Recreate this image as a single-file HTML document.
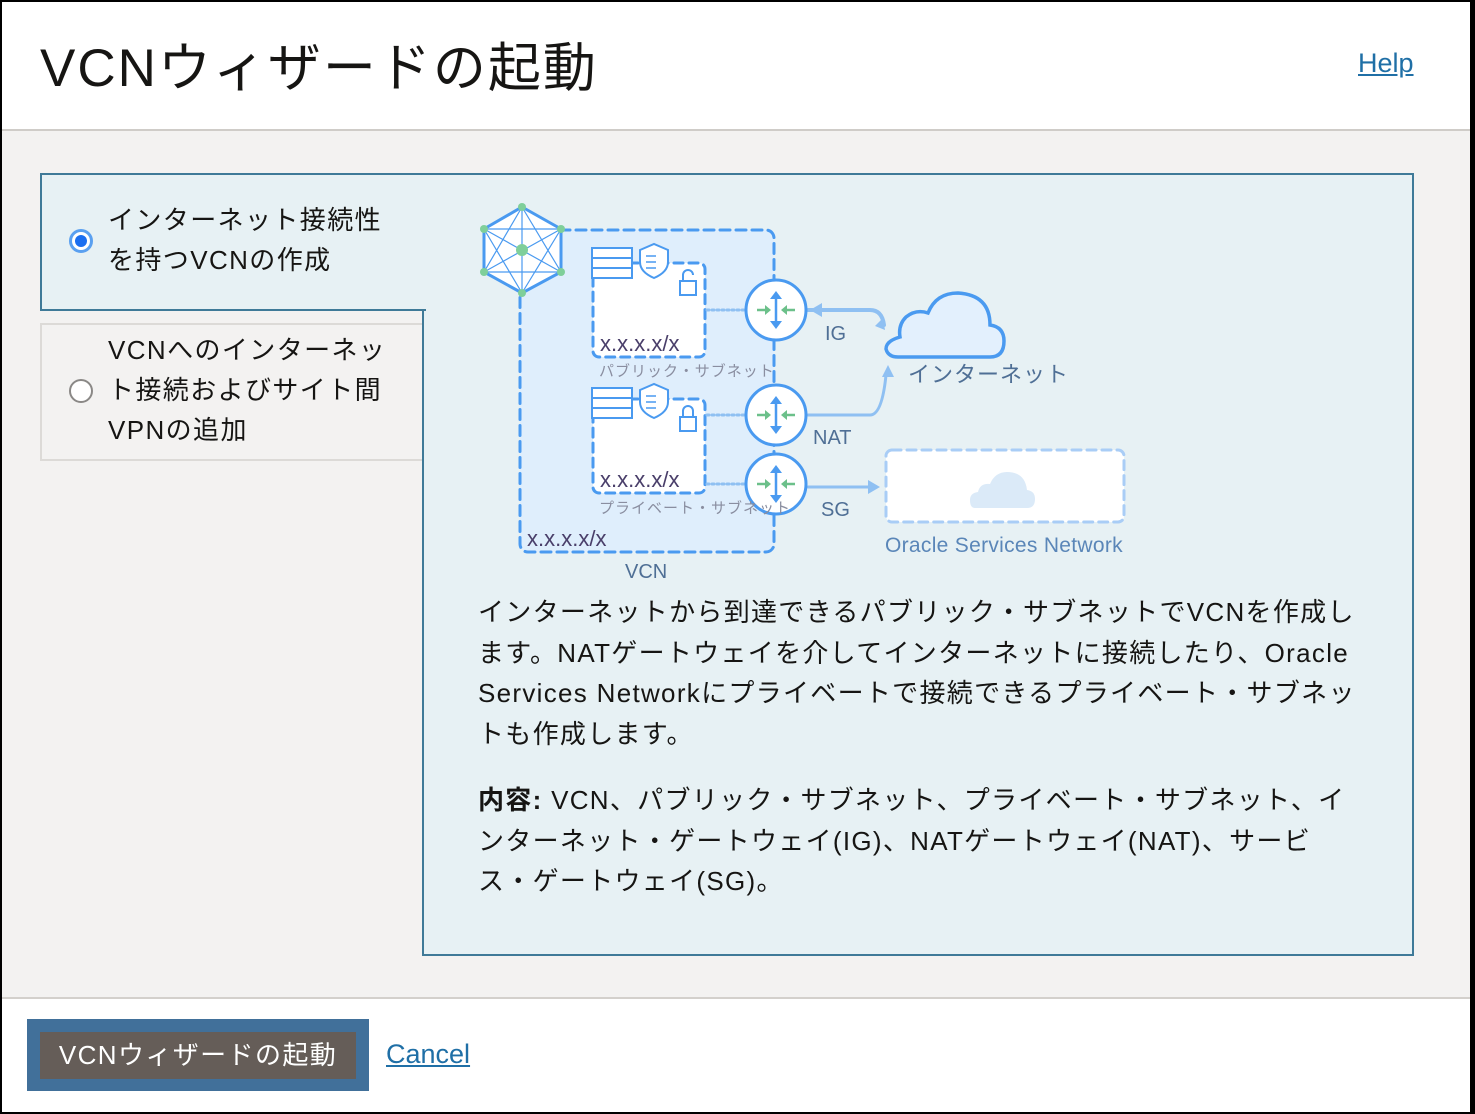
<!DOCTYPE html>
<html><head><meta charset="utf-8">
<style>
*{margin:0;padding:0;box-sizing:border-box}
body{width:1475px;height:1114px;overflow:hidden;background:#000;font-family:"Liberation Sans","Noto Sans CJK JP",sans-serif;color:#161513;position:relative}
.page{position:absolute;left:2px;top:2px;width:1468px;height:1110px;background:#f3f2f1}
.hdr{position:absolute;left:0;top:0;width:1468px;height:129px;background:#fff;border-bottom:2px solid #cfccc8}
.title{position:absolute;left:38px;top:24px;font-size:53px;letter-spacing:2px;white-space:nowrap;color:#161513}
.help{position:absolute;left:1356px;top:46px;font-size:27px;color:#1f6fa6;text-decoration:underline}
.ftr{position:absolute;left:0;top:995px;width:1468px;height:115px;background:#fff;border-top:2px solid #d3d0cc}
.btnO{position:absolute;left:25px;top:20px;width:342px;height:72px;background:#41709a}
.btnI{position:absolute;left:13px;top:13px;width:316px;height:47px;background:#655d58;color:#fff;font-size:26px;line-height:47px;text-align:center;white-space:nowrap;letter-spacing:1.4px}
.cancel{position:absolute;left:384px;top:40px;font-size:27px;color:#1f6fa6;text-decoration:underline}
.panel{position:absolute;left:420px;top:171px;width:992px;height:783px;background:#e7f1f4;border:2px solid #3f7a98}
.tab1{position:absolute;left:38px;top:171px;width:386px;height:138px;background:#e7f1f4;border:2px solid #3f7a98;border-right:none}
.tab2{position:absolute;left:38px;top:321px;width:382px;height:138px;border:2px solid #dcdad7;border-right:none}
.opt{position:absolute;left:68px;font-size:26px;line-height:40px;white-space:nowrap;letter-spacing:1.4px}
.radio{position:absolute;width:24px;height:24px;border-radius:50%}
.desc{position:absolute;left:476px;font-size:26px;line-height:40.5px;white-space:nowrap;letter-spacing:1.3px;color:#161513}
</style></head><body>
<div class="page">
 <div class="hdr"><div class="title">VCNウィザードの起動</div><div class="help">Help</div></div>
 <div class="panel"></div>
 <div class="tab1"></div>
 <div class="tab2"></div>
 <div class="radio" style="left:67px;top:227px;border:3px solid #5aa0f0;background:#fff"><div style="position:absolute;left:3px;top:3px;width:12px;height:12px;border-radius:50%;background:#1a6ef0"></div></div>
 <div class="opt" style="left:106px;top:198px">インターネット接続性<br>を持つVCNの作成</div>
 <div class="radio" style="left:67px;top:377px;border:2px solid #8a8886;background:#fff"></div>
 <div class="opt" style="left:106px;top:328px">VCNへのインターネッ<br>ト接続およびサイト間<br>VPNの追加</div>

 <svg style="position:absolute;left:0;top:0" width="1468" height="1000" viewBox="2 2 1468 1000">
  <g fill="none" stroke-linecap="round">
   <rect x="520" y="230" width="254" height="322" rx="8" fill="#dfeefc" stroke="#4a9af0" stroke-width="3" stroke-dasharray="10 6"/>
   <rect x="593" y="263" width="112" height="94" rx="6" fill="#fff" stroke="#4a9af0" stroke-width="3" stroke-dasharray="9 6"/>
   <rect x="593" y="399" width="112" height="94" rx="6" fill="#fff" stroke="#4a9af0" stroke-width="3" stroke-dasharray="9 6"/>
   <rect x="886" y="450" width="238" height="72" rx="6" fill="#fff" stroke="#a9cdf6" stroke-width="3" stroke-dasharray="9 6"/>
   <path d="M707 310H746M707 415H746M707 484H746" stroke="#8fc0f2" stroke-width="3" stroke-dasharray="2 3"/>
   <path d="M808 310H870Q882 310 884 325" stroke="#8fc0f2" stroke-width="4"/>
   <path d="M808 415H870Q882 415 886 375" stroke="#8fc0f2" stroke-width="3"/>
   <path d="M808 487H868" stroke="#8fc0f2" stroke-width="3"/>
  </g>
  <path d="M810 310l12-7v14z M885 330l-10-4 8-8z M888 365l-6 12h12z M880 487l-12-7v14z" fill="#8fc0f2"/>
  <g stroke="#4a9af0" stroke-width="3" fill="#fff">
   <polygon points="522,207 561,229 561,272 522,293 484,272 484,229"/>
  </g>
  <g stroke="#4a9af0" stroke-width="1.2">
   <path d="M522 207L484 272M522 207L561 272M484 229L561 272M561 229L484 272M484 229L522 293M561 229L522 293M484 229L561 229M484 272L561 272M522 207L522 293"/>
  </g>
  <g fill="#7fcf9a"><circle cx="522" cy="207" r="4"/><circle cx="561" cy="229" r="4"/><circle cx="561" cy="272" r="4"/><circle cx="522" cy="293" r="4"/><circle cx="484" cy="272" r="4"/><circle cx="484" cy="229" r="4"/><circle cx="522" cy="250" r="6"/></g>
  <g stroke="#4a9af0" stroke-width="2" fill="#fff">
   <rect x="592" y="248" width="40" height="30"/><path d="M592 258H632M592 268H632"/>
   <path d="M640 250l14-6 14 6v12q0 10-14 16q-14-6-14-16z"/>
   <path d="M646 256h10M646 262h10M646 268h10" stroke-width="1.5"/>
   <rect x="680" y="281" width="16" height="14"/><path d="M683 281v-6a5 5 0 0 1 10 0" fill="none"/>
   <rect x="592" y="388" width="40" height="30"/><path d="M592 398H632M592 408H632"/>
   <path d="M640 390l14-6 14 6v12q0 10-14 16q-14-6-14-16z"/>
   <path d="M646 396h10M646 402h10M646 408h10" stroke-width="1.5"/>
   <rect x="680" y="417" width="16" height="14"/><path d="M683 417v-6a5 5 0 0 1 10 0v6" fill="none"/>
  </g>
  <g stroke="#4a9af0" stroke-width="3" fill="#fff">
   <circle cx="776" cy="310" r="30"/><circle cx="776" cy="415" r="30"/><circle cx="776" cy="484" r="30"/>
  </g>
  <g stroke-width="2.5" fill="none">
   <path d="M776 296V324M776 401V429M776 470V498" stroke="#4a9af0"/>
   <path d="M757 310H768M795 310H784M757 415H768M795 415H784M757 484H768M795 484H784" stroke="#6cc08a"/>
  </g>
  <g fill="#4a9af0">
   <path d="M776 291l-6 8h12zM776 329l-6-8h12zM776 396l-6 8h12zM776 434l-6-8h12zM776 465l-6 8h12zM776 503l-6-8h12z"/>
  </g>
  <g fill="#6cc08a">
   <path d="M771 310l-6-5v10zM781 310l6-5v10zM771 415l-6-5v10zM781 415l6-5v10zM771 484l-6-5v10zM781 484l6-5v10z"/>
  </g>
  <path d="M898 357H990q14 0 14-16q0-14-14-16q0-30-32-32q-22 0-30 20q-12-4-22 4q-8 8-6 20q-14 4-14 12q2 8 12 8z" fill="#e3f0fd" stroke="#4a9af0" stroke-width="3.5"/>
  <path d="M975 508h52q8 0 8-9q0-8-8-9q-2-18-20-18q-12 0-17 12q-10-1-12 8q-8 1-8 8q0 8 5 8z" fill="#dbeaf8"/>
  <g font-family="Liberation Sans,Noto Sans CJK JP,sans-serif" fill="#4f6f95">
   <text x="600" y="351" font-size="22" fill="#4a3f6a" letter-spacing="0">x.x.x.x/x</text>
   <text x="600" y="487" font-size="22" fill="#4a3f6a" letter-spacing="0">x.x.x.x/x</text>
   <text x="527" y="546" font-size="22" fill="#4a3f6a" letter-spacing="0">x.x.x.x/x</text>
   <text x="599" y="376" font-size="15" fill="#8a8ea0" letter-spacing="1">パブリック・サブネット</text>
   <text x="599" y="513" font-size="15" fill="#8a8ea0" letter-spacing="1">プライベート・サブネット</text>
   <text x="625" y="578" font-size="20">VCN</text>
   <text x="825" y="340" font-size="20">IG</text>
   <text x="813" y="444" font-size="20">NAT</text>
   <text x="821" y="516" font-size="20">SG</text>
   <text x="908" y="382" font-size="22" letter-spacing="1">インターネット</text>
   <text x="885" y="552" font-size="21" fill="#5a86b8" letter-spacing="0.3">Oracle Services Network</text>
  </g>
 </svg>

 <div class="desc" style="top:590px">インターネットから到達できるパブリック・サブネットでVCNを作成し<br>ます。NATゲートウェイを介してインターネットに接続したり、Oracle<br>Services Networkにプライベートで接続できるプライベート・サブネッ<br>トも作成します。</div>
 <div class="desc" style="top:778px"><b>内容:</b> VCN、パブリック・サブネット、プライベート・サブネット、イ<br>ンターネット・ゲートウェイ(IG)、NATゲートウェイ(NAT)、サービ<br>ス・ゲートウェイ(SG)。</div>

 <div class="ftr"><div class="btnO"><div class="btnI">VCNウィザードの起動</div></div><div class="cancel">Cancel</div></div>
</div>
</body></html>
